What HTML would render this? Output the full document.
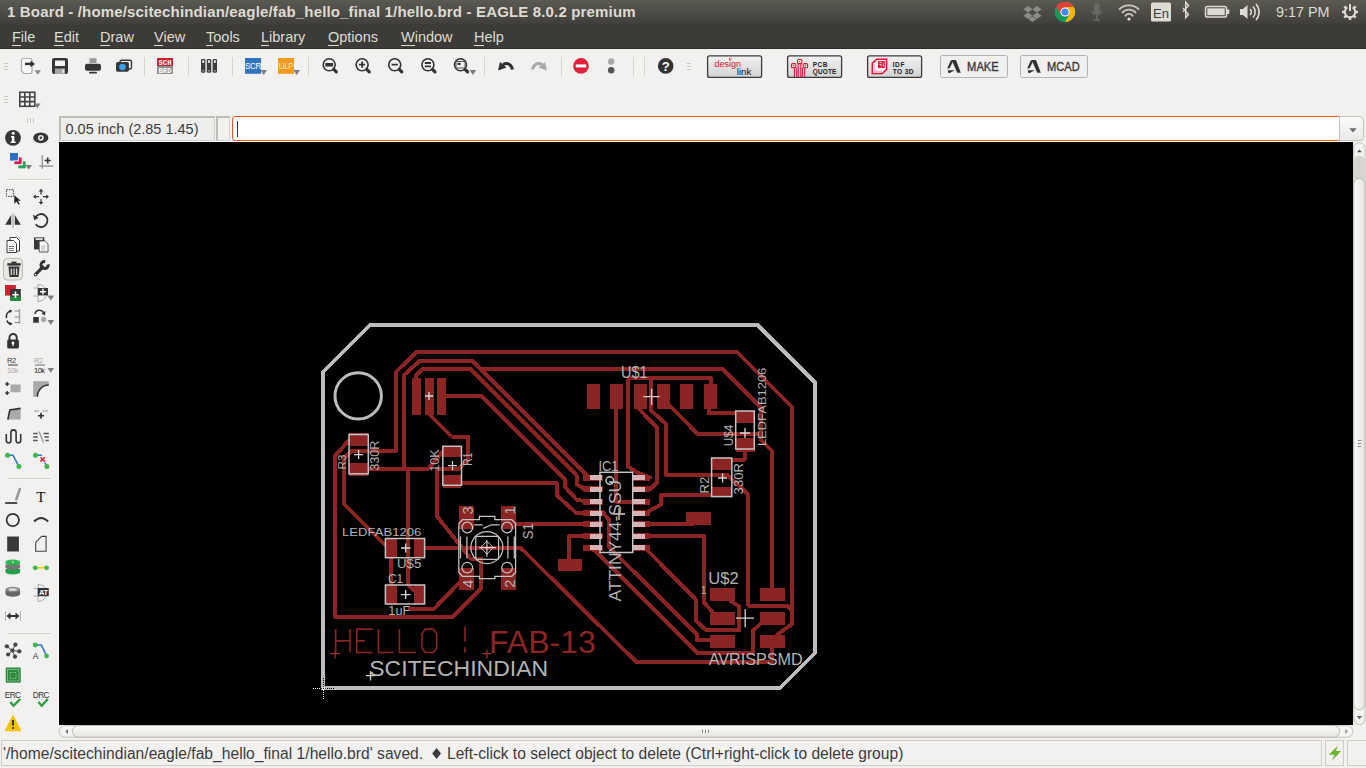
<!DOCTYPE html>
<html><head><meta charset="utf-8">
<style>
*{margin:0;padding:0;box-sizing:border-box}
html,body{width:1366px;height:768px;overflow:hidden;background:#f2f1f0;font-family:"Liberation Sans",sans-serif}
.a{position:absolute}
#title{left:0;top:0;width:1366px;height:24px;background:linear-gradient(#5a5952,#403f3b)}
#menu{left:0;top:24px;width:1366px;height:25px;background:#3c3b37;border-bottom:1px solid #2e2d2a}
.tt{color:#dfdbd2;font-weight:bold;font-size:15px;letter-spacing:0.16px;white-space:pre}
.mi{color:#dfdbd2;font-size:14.5px;white-space:pre;top:28.8px}
.mi u{text-decoration:none;border-bottom:1px solid #dfdbd2}
#canvas{left:59px;top:142px;width:1294px;height:583px;background:#000}
#coord{left:59px;top:116px;width:156px;height:25px;border:1px solid #d3d1cd;border-top:2px solid #bebcb8;border-left:2px solid #bebcb8;background:#efeeec}
#coordtxt{left:65.5px;top:121px;font-size:14.5px;color:#3c3c3c;white-space:pre}
#cbox2{left:216px;top:116px;width:14px;height:25px;border:1px solid #d3d1cd;border-top:2px solid #bebcb8;border-left:2px solid #bebcb8}
#cmd{left:232px;top:116px;width:1108px;height:25px;border:1px solid #e35d2c;border-radius:3px 0 0 3px;background:#fff}
#cmddrop{left:1339px;top:116px;width:25px;height:25px;border:1px solid #c3c1bd;border-radius:0 4px 4px 0;background:linear-gradient(#fbfbfa,#eae9e7)}
#vscroll{left:1353px;top:142px;width:13px;height:583px;background:#f2f1f0}
#hscroll{left:59px;top:725px;width:1294px;height:13px;background:#f2f1f0}
#status{left:1px;top:740px;width:1321px;height:26px;border:1px solid #cfcdca;background:#f2f1f0}
#st2{left:1325px;top:740px;width:19px;height:26px;border:1px solid #cfcdca}
#st3{left:1347px;top:740px;width:19px;height:26px;border:1px solid #cfcdca;border-right:none}
.sttxt{top:744.6px;font-size:15.6px;color:#3c3c3c;white-space:pre}
</style></head><body>
<div id="title" class="a"></div>
<div class="a tt" style="left:7px;top:3px">1 Board - /home/scitechindian/eagle/fab_hello_final 1/hello.brd - EAGLE 8.0.2 premium</div>
<div id="menu" class="a"></div>
<div class="a mi" style="left:12px"><u>F</u>ile</div>
<div class="a mi" style="left:54px"><u>E</u>dit</div>
<div class="a mi" style="left:100px"><u>D</u>raw</div>
<div class="a mi" style="left:154px"><u>V</u>iew</div>
<div class="a mi" style="left:206px"><u>T</u>ools</div>
<div class="a mi" style="left:261px"><u>L</u>ibrary</div>
<div class="a mi" style="left:328px"><u>O</u>ptions</div>
<div class="a mi" style="left:401px"><u>W</u>indow</div>
<div class="a mi" style="left:474px"><u>H</u>elp</div>
<div class="a" style="left:1276px;top:4px;font-size:14.4px;color:#dfdbd2;white-space:pre">9:17 PM</div>

<div id="coord" class="a"></div>
<div id="coordtxt" class="a">0.05 inch (2.85 1.45)</div>
<div id="cbox2" class="a"></div>
<div id="cmd" class="a"></div>
<div class="a" style="left:237px;top:121px;width:1px;height:16px;background:#333"></div>
<div id="cmddrop" class="a"></div>

<div id="canvas" class="a"></div>
<div id="vscroll" class="a"></div>
<div id="hscroll" class="a"></div>

<div id="status" class="a"></div>
<div id="st2" class="a"></div>
<div id="st3" class="a"></div>
<div class="a sttxt" style="left:3px;letter-spacing:0.025px">'/home/scitechindian/eagle/fab_hello_final 1/hello.brd' saved.</div>
<div class="a sttxt" style="left:447px">Left-click to select object to delete (Ctrl+right-click to delete group)</div>

<svg class="a" style="left:0;top:0;font-family:'Liberation Sans'" width="1366" height="768" viewBox="0 0 1366 768">
<g id="grips" stroke="#c9c7c3" stroke-width="1">
<path d="M4,63.5h4M4,66.5h4M4,69.5h4"/>
<path d="M4,96.5h4M4,99.5h4M4,102.5h4"/>
<path d="M687,63.5h4M687,66.5h4M687,69.5h4"/>
<path d="M27.5,118v5M30.5,118v5M33.5,118v5"/>
</g>
<g id="seps" stroke="#d5d3cf" stroke-width="1">
<path d="M144.5,57v19M188.5,57v19M232.5,57v19M308.5,57v19M484.5,57v19M561.5,57v19M633.5,57v19M644.5,57v19"/>
</g>
<!-- import -->
<path d="M23,58.5h7a2,2 0 0 1 2,2v11a2,2 0 0 1 -2,2h-6l-2.5,-2.5v-10.5a2,2 0 0 1 1.5,-2z" fill="#fafafa" stroke="#a9a9a9" stroke-width="1.2"/>
<path d="M25,63.9h6" stroke="#2e2e2e" stroke-width="2.4"/>
<path d="M30.5,60.5l4.5,3.4l-4.5,3.4z" fill="#2e2e2e"/>
<path d="M34.5,70.2h6.5l-3.25,4.6z" fill="#8a8a8a"/>
<!-- save -->
<rect x="52" y="58" width="16" height="16" rx="2.2" fill="#363636"/>
<rect x="55" y="60.5" width="10" height="5.5" fill="#f2f2f2"/>
<rect x="55" y="68.5" width="10" height="5.5" fill="#a6a6a6"/>
<rect x="62.3" y="69.5" width="1.6" height="3.5" fill="#f0f0f0"/>
<!-- print -->
<rect x="89.5" y="58.2" width="7" height="4.8" fill="#9a9a9a"/>
<rect x="85" y="63.8" width="16" height="7" rx="2" fill="#363636"/>
<rect x="89" y="71.8" width="8" height="1.8" rx="0.9" fill="#363636"/>
<!-- camera -->
<rect x="120" y="60.3" width="11.5" height="8.7" rx="1.8" fill="none" stroke="#363636" stroke-width="1.4"/>
<rect x="116" y="61.9" width="12.9" height="9.8" rx="1.6" fill="#363636"/>
<circle cx="122.5" cy="67" r="3.3" fill="#3ca4e4"/>
<!-- sch brd -->
<rect x="157" y="58" width="16" height="8" fill="#c9202f"/>
<rect x="157" y="66" width="16" height="8" fill="#919191"/>
<text x="165" y="64.9" font-size="7.2" font-weight="bold" fill="#fff" text-anchor="middle" font-family="Liberation Mono">SCH</text>
<text x="165" y="72.9" font-size="7.2" font-weight="bold" fill="#fff" text-anchor="middle" font-family="Liberation Mono">BRD</text>
<!-- library -->
<g fill="#3e3e3e"><rect x="201" y="59" width="4.4" height="13.8" rx="1.2"/><rect x="206.8" y="59" width="4.4" height="13.8" rx="1.2"/><rect x="212.6" y="59" width="4.4" height="13.8" rx="1.2"/></g>
<g fill="#fff"><rect x="202.3" y="60.3" width="1.8" height="2.5"/><rect x="208.1" y="60.3" width="1.8" height="2.5"/><rect x="213.9" y="60.3" width="1.8" height="2.5"/></g>
<g fill="#9a9a9a"><rect x="202.3" y="70" width="1.8" height="1.5"/><rect x="208.1" y="70" width="1.8" height="1.5"/><rect x="213.9" y="70" width="1.8" height="1.5"/></g>
<!-- SCR ULP -->
<rect x="245" y="58" width="16" height="15.8" fill="#2f74c0"/>
<text x="253" y="69.3" font-size="8.2" fill="#fff" text-anchor="middle" letter-spacing="-0.5">SCR</text>
<path d="M260.4,70h6.6l-3.3,5z" fill="#7d7d7d"/>
<rect x="278" y="58" width="16" height="15.8" fill="#f39a1f"/>
<text x="286" y="69.3" font-size="8.2" fill="#fde6c4" text-anchor="middle" letter-spacing="-0.5">ULP</text>
<path d="M293.4,70h6.6l-3.3,5z" fill="#7d7d7d"/>
<!-- zooms -->
<g stroke="#333" fill="none">
<circle cx="329.2" cy="64.7" r="6" stroke-width="1.6"/>
<circle cx="362.1" cy="64.7" r="6" stroke-width="1.6"/>
<circle cx="394.7" cy="64.7" r="6" stroke-width="1.6"/>
<circle cx="427.9" cy="64.7" r="6" stroke-width="1.6"/>
<circle cx="460.5" cy="64.7" r="6" stroke-width="1.6"/>
<path d="M333.8,69.3l2.5,2.5M366.7,69.3l2.5,2.5M399.3,69.3l2.5,2.5M432.5,69.3l2.5,2.5M465.1,69.3l2.5,2.5" stroke-width="3.2" stroke-linecap="round"/>
<path d="M359,64.7h6.2M362.1,61.6v6.2M391.6,64.7h6.2M424.8,63h6.2M424.8,66.4h6.2" stroke-width="1.8"/>
</g>
<rect x="325.3" y="63" width="7.8" height="3.5" fill="#333"/>
<rect x="456" y="61.5" width="9" height="6.5" fill="none" stroke="#555" stroke-width="1"/>
<rect x="457.5" y="62.8" width="3" height="2.2" fill="#333"/>
<path d="M469.6,70h6.6l-3.3,5z" fill="#7d7d7d"/>
<!-- undo redo -->
<path d="M512.5,69.5c-1,-5 -5,-7.5 -9.5,-5" fill="none" stroke="#2e2e2e" stroke-width="3"/>
<path d="M498,70.5l2,-8.5l6.5,5.5z" fill="#2e2e2e"/>
<path d="M532.5,69.5c1,-5 5,-7.5 9.5,-5" fill="none" stroke="#a8a8a8" stroke-width="3"/>
<path d="M547,70.5l-2,-8.5l-6.5,5.5z" fill="#a8a8a8"/>
<!-- stop, dots, help -->
<circle cx="581" cy="65.9" r="7.8" fill="#e2213b"/>
<rect x="575.8" y="64.4" width="10.4" height="3" fill="#fff"/>
<circle cx="611.2" cy="61.5" r="3.2" fill="#a9a9a9"/>
<circle cx="611.2" cy="70.3" r="3.3" fill="#555"/>
<circle cx="665.7" cy="65.9" r="7.8" fill="#333"/>
<text x="665.7" y="70.6" font-size="13" font-weight="bold" fill="#fff" text-anchor="middle">?</text>
<!-- buttons -->
<defs><linearGradient id="bg1" x1="0" y1="0" x2="0" y2="1"><stop offset="0" stop-color="#f3f3f3"/><stop offset="1" stop-color="#d2d2d2"/></linearGradient></defs>
<g stroke="#3a3a3a" stroke-width="1.3" fill="url(#bg1)">
<rect x="707.6" y="55.8" width="54" height="21.6" rx="2"/>
<rect x="787.6" y="55.8" width="54" height="21.6" rx="2"/>
<rect x="867.6" y="55.8" width="54" height="21.6" rx="2"/>
</g>
<text x="714.6" y="66.8" font-size="9.6" fill="#e0102e" textLength="26.5" lengthAdjust="spacingAndGlyphs">design</text>
<text x="736.8" y="74.8" font-size="9.6" fill="#111" textLength="14.6" lengthAdjust="spacingAndGlyphs">link</text>
<path d="M730.2,57.8l1.2,1.2l-1.2,1.2l-1.2,-1.2z" fill="none" stroke="#e0102e" stroke-width="0.7"/>
<g stroke="#e0102e" stroke-width="1.05" fill="none">
<path d="M794.4,77V67.8M796.7,77V67.8M798.2,77V63.6M800.8,77V63.6M802.4,77V67.8M804.7,77V67.8"/>
<rect x="791.5" y="63.6" width="4.3" height="4.2" rx="1"/><rect x="797.5" y="59.4" width="4.3" height="4.2" rx="1"/><rect x="803.3" y="63.6" width="4.3" height="4.2" rx="1"/>
</g>
<g fill="#e0102e"><circle cx="793.6" cy="65.7" r="0.6"/><circle cx="799.6" cy="61.5" r="0.6"/><circle cx="805.4" cy="65.7" r="0.6"/></g>
<text x="812.8" y="66.7" font-size="6.5" font-weight="bold" fill="#1e1e1e" textLength="14.6" lengthAdjust="spacing">PCB</text>
<text x="812.8" y="73.9" font-size="6.5" font-weight="bold" fill="#1e1e1e" textLength="23.5" lengthAdjust="spacing">QUOTE</text>
<path d="M872.3,63.4L876.7,59.3H886.6V69.4L882.4,73.6H872.3Z" fill="#fff" stroke="#e0102e" stroke-width="1.5"/>
<rect x="878" y="61.1" width="6.8" height="6.8" fill="#e0102e"/>
<path d="M879.3,62.6h2.4M879.3,64.6h1.8v1.8M883.3,63.3v3.2" stroke="#fff" stroke-width="0.8" fill="none"/>
<path d="M874.3,64v7.5h8M874.3,71.5l1.8,-1.8" stroke="#f0a0ab" stroke-width="0.8" fill="none"/>
<text x="892.7" y="66.8" font-size="6.6" font-weight="bold" fill="#222" letter-spacing="0.6">IDF</text>
<text x="892.7" y="74" font-size="6.6" font-weight="bold" fill="#222" letter-spacing="0.4">TO 3D</text>
<g stroke="#b3b3b3" stroke-width="1" fill="#f1f0ef">
<rect x="940.5" y="55.5" width="67" height="22" rx="2"/>
<rect x="1020.5" y="55.5" width="67" height="22" rx="2"/>
</g>
<g fill="#333" transform="translate(0,0)">
<path d="M951,60.1H956L960.8,72.8H957.2L952.6,62.2Z"/>
<path d="M951,60.1L952.6,62.2L949.4,68.6H947.2Z"/>
<path d="M947.8,70.3H954.8L949.6,72.9H948.3Z"/>
</g>
<g fill="#333" transform="translate(80,0)">
<path d="M951,60.1H956L960.8,72.8H957.2L952.6,62.2Z"/>
<path d="M951,60.1L952.6,62.2L949.4,68.6H947.2Z"/>
<path d="M947.8,70.3H954.8L949.6,72.9H948.3Z"/>
</g>
<text x="967.1" y="70.9" font-size="12.1" fill="#3a3a3a" stroke="#3a3a3a" stroke-width="0.35" textLength="31.6" lengthAdjust="spacingAndGlyphs">MAKE</text>
<text x="1047.1" y="70.9" font-size="12.1" fill="#3a3a3a" stroke="#3a3a3a" stroke-width="0.35" textLength="32.6" lengthAdjust="spacingAndGlyphs">MCAD</text>
<!-- grid icon toolbar2 -->
<g stroke="#444" stroke-width="1.6" fill="none">
<rect x="19.8" y="92.3" width="15" height="14"/>
<path d="M24.8,92.3v14M29.8,92.3v14M19.8,97h15M19.8,101.6h15"/>
</g>
<path d="M34,103.5h6.6l-3.3,4.8z" fill="#7d7d7d"/>
<!-- left panel -->
<g id="lp">
<circle cx="13" cy="137.8" r="7.9" fill="#373737"/>
<circle cx="13.2" cy="133.3" r="1.5" fill="#fff"/>
<path d="M11,136h3.3v5.6h1.3v1.5h-5v-1.5h1.3v-4.1h-0.9z" fill="#fff"/>
<ellipse cx="40.8" cy="137.8" rx="7.6" ry="5.4" fill="#373737"/>
<circle cx="40.8" cy="137.8" r="2.9" fill="#f2f1f0"/>
<circle cx="40.8" cy="137.8" r="1.3" fill="#373737"/>
<rect x="10" y="153" width="8" height="7.6" fill="#2d6fc0"/>
<path d="M18.5,157h3.5v7.6h-8v-3.6h4.5z" fill="#d81b4c" stroke="#fff" stroke-width="0.7"/>
<path d="M22.5,161h3.5v7.8h-8v-3.8h4.5z" fill="#20a455" stroke="#fff" stroke-width="0.7"/>
<path d="M25.3,165h6.7l-3.35,4.6z" fill="#7d7d7d"/>
<path d="M42.3,155.2v13.6M39.3,166h13.9" stroke="#9a9a9a" stroke-width="1.5"/>
<path d="M44.7,160.5h6M47.7,157.5v6" stroke="#333" stroke-width="1.6"/>
<path d="M8.2,179.5h42.8" stroke="#d3d1cd" stroke-width="1"/>
<path d="M8.2,180.5h42.8" stroke="#fbfbfa" stroke-width="1"/>
<!-- select / move -->
<rect x="6.4" y="189.7" width="7" height="6.7" fill="none" stroke="#333" stroke-width="1" stroke-dasharray="1.5,1"/>
<path d="M14.3,195.2v8.5l2.2,-2.2l2,3.3l1.3,-0.8l-2,-3.2h3z" fill="#222"/>
<g fill="#333"><path d="M41,188.7l-2.3,2.8h4.6z M41,204.7l-2.3,-2.8h4.6z M33,196.7l2.8,-2.3v4.6z M49,196.7l-2.8,-2.3v4.6z"/></g>
<path d="M41,191v3.5M41,199v3.5M35.5,196.7h3.5M43,196.7h3.5" stroke="#333" stroke-width="1.2"/>
<!-- mirror / rotate -->
<path d="M5.2,224.7l6,-9.7v9.7z M20.8,224.7l-6,-9.7v9.7z" fill="#333"/>
<path d="M13,213.6v14.4" stroke="#aaa" stroke-width="1.3"/>
<path d="M35.7,224.3a6.5,6.5 0 1 0 -0.6,-6.5" fill="none" stroke="#333" stroke-width="1.8"/>
<path d="M33,214.8l1.2,5.5l4.5,-2.5z" fill="#333"/>
<!-- copy / paste -->
<path d="M10,237.5h6.5l3,3v10.5h-9.5z" fill="#fff" stroke="#3a3a3a" stroke-width="1"/>
<path d="M7,240.5h6.5l3,3v9h-9.5z" fill="#fff" stroke="#3a3a3a" stroke-width="1"/>
<path d="M9,246.5h5M9,248.5h5M9,250.5h5" stroke="#666" stroke-width="0.9"/>
<rect x="34" y="237.4" width="10.3" height="12" fill="#363636"/>
<rect x="35.5" y="238.3" width="7.3" height="1.6" fill="#f2f1f0"/>
<path d="M39.2,241h6l2.8,2.8v8.2h-8.8z" fill="#fff" stroke="#555" stroke-width="1"/>
<path d="M41,246h4.5M41,248h4.5M41,250h4.5" stroke="#999" stroke-width="0.8"/>
<!-- delete selected / wrench -->
<rect x="3.5" y="258.5" width="19" height="21.5" rx="3.5" fill="#e9e7e4" stroke="#bcbab6" stroke-width="1"/>
<rect x="7.3" y="263.2" width="13.4" height="2.4" fill="#333"/>
<rect x="11.5" y="261.6" width="5" height="2" fill="#333"/>
<path d="M8.5,266.5h11l-1,10.5h-9z" fill="#333"/>
<path d="M11.3,268.5v6.5M14,268.5v6.5M16.7,268.5v6.5" stroke="#e9e7e4" stroke-width="1.2"/>
<path d="M35.3,274.7l7.5,-7.5" stroke="#333" stroke-width="3.2" stroke-linecap="round"/>
<path d="M48.15,264.37A3.6,3.6 0 1 1 45.22,261.45" fill="none" stroke="#333" stroke-width="3"/>
<circle cx="35.4" cy="274.6" r="0.8" fill="#f2f1f0"/>
<!-- add / replace -->
<rect x="5" y="285" width="10.9" height="10.6" fill="#d21f2e"/>
<rect x="10.2" y="289" width="10.6" height="11.8" fill="#373737"/>
<rect x="10.2" y="296.7" width="10.6" height="4.1" fill="#21913a"/>
<path d="M12.3,294.7h6.4M15.5,291.5v6.4" stroke="#fff" stroke-width="1.6"/>
<path d="M38,284.5c6,0 8.5,4 8.5,8.5s-2.5,8 -8.5,8.5M38,284.5v17M33.5,288h4.5M33.5,296h4.5" fill="none" stroke="#aaa" stroke-width="1"/>
<rect x="37.8" y="288" width="10.2" height="7.4" fill="#373737"/>
<path d="M40,291.7h5.8M42.9,288.8v5.8" stroke="#fff" stroke-width="1.4"/>
<path d="M47.5,295.6h6.6l-3.3,5z" fill="#7d7d7d"/>
<!-- pinswap / smash -->
<path d="M10.5,311c-3.5,1 -4.5,4.5 -4,7M7,320.5c0.5,2 2,3.5 4.5,3.5" fill="none" stroke="#333" stroke-width="1.6"/>
<path d="M9,309.5l3.5,1.3l-2.8,2.5z M9.5,325.5l3,-1.8l-3,-2z" fill="#333"/>
<path d="M19.5,309v15" stroke="#aaa" stroke-width="1.6"/>
<path d="M14.6,311h4.9M14.6,317h4.9M14.6,322.5h4.9" stroke="#888" stroke-width="1.2"/>
<rect x="33.2" y="317" width="5.6" height="5.7" fill="#333"/>
<circle cx="43.6" cy="319.5" r="2.7" fill="#a8a8a8"/>
<path d="M35,314c0.5,-4 6,-5.5 9,-1" fill="none" stroke="#333" stroke-width="1.5"/>
<path d="M45.5,311l-0.5,4.5l-3.5,-2z" fill="#333"/>
<path d="M47.5,320h6.6l-3.3,5z" fill="#7d7d7d"/>
<!-- lock -->
<path d="M9.5,340.5v-3a3.6,3.6 0 0 1 7.2,0v3" fill="none" stroke="#333" stroke-width="2"/>
<rect x="7.2" y="339.5" width="11.7" height="9" rx="1.5" fill="#333"/>
<circle cx="13" cy="343" r="1.4" fill="#fff"/>
<rect x="12.4" y="343" width="1.2" height="3" fill="#fff"/>
<!-- name/value -->
<text x="7" y="362.8" font-size="7.5" fill="#333" letter-spacing="-0.3">R2</text>
<path d="M8,365h10" stroke="#666" stroke-width="1.3"/>
<text x="7" y="373" font-size="7.5" fill="#aaa" letter-spacing="-0.3">10k</text>
<text x="34" y="362.8" font-size="7.5" fill="#aaa" letter-spacing="-0.3">R2</text>
<path d="M35,365h10" stroke="#888" stroke-width="1.3"/>
<text x="34" y="373" font-size="7.5" fill="#222" letter-spacing="-0.5">10k</text>
<path d="M47.5,368h6.6l-3.3,4.8z" fill="#7d7d7d"/>
<!-- row 389 -->
<path d="M5.2,384h4M7.2,382v4M5.2,393h4M7.2,391v4" stroke="#333" stroke-width="1.4"/>
<rect x="10.4" y="384.5" width="10.2" height="7.8" fill="#aaa"/>
<path d="M33.2,381.2h15.6v3.8a11.4,11.6 0 0 0 -11.4,11.8h-4.2z" fill="#a9a9a9"/>
<path d="M48.8,385a11.4,11.6 0 0 0 -11.4,11.8" fill="none" stroke="#333" stroke-width="1.6"/>
<!-- row 413 -->
<path d="M7.8,419.6l2,-9.6l10.8,-2v11.6z" fill="#aaa"/>
<path d="M7.8,419.6l2,-9.6l10.8,-1.6" fill="none" stroke="#333" stroke-width="1.6"/>
<path d="M34,411h5M42.3,411h5.7" stroke="#999" stroke-width="1.2"/>
<path d="M38,415.7h6M41,412.7v6" stroke="#333" stroke-width="1.6"/>
<!-- meander / split -->
<path d="M6.3,434v6.5a2.3,2.3 0 0 0 4.6,0v-8a2.6,2.6 0 0 1 5.2,0v8a2.3,2.3 0 0 0 4.6,0v-6.5" fill="none" stroke="#333" stroke-width="1.6"/>
<path d="M33.2,433.5h4.5M33.2,437h4.5M33.2,440.5h4.5M43.5,433.5h5.3M44.5,437h4.3M45.5,440.5h3.3" stroke="#555" stroke-width="1.4"/>
<path d="M39,431.5l4.5,11" stroke="#999" stroke-width="1.3"/>
<!-- route / ripup -->
<path d="M7.5,455.2h5.5l5.9,11.3" fill="none" stroke="#2b74c5" stroke-width="1.6"/>
<circle cx="7.5" cy="455.2" r="2.5" fill="#3db94a"/><circle cx="18.9" cy="466.5" r="2.5" fill="#3db94a"/>
<path d="M35.5,455.2h5.5l5.9,11.3" fill="none" stroke="#2b74c5" stroke-width="1.6"/>
<rect x="39.5" y="456" width="6.5" height="6.5" fill="#f2f1f0"/>
<path d="M40.5,457.3l4.3,4.3M44.8,457.3l-4.3,4.3" stroke="#e0203a" stroke-width="1.5"/>
<circle cx="35.5" cy="455.2" r="2.5" fill="#3db94a"/><circle cx="46.9" cy="466.5" r="2.5" fill="#3db94a"/>
<path d="M8,478.5h42.8" stroke="#d3d1cd" stroke-width="1"/>
<!-- wire / text -->
<path d="M5.2,503h12" stroke="#222" stroke-width="1.6"/>
<path d="M16.3,499.4l3.5,-10.4" stroke="#999" stroke-width="2.6" stroke-linecap="round"/>
<text x="40.8" y="502" font-size="15" fill="#111" text-anchor="middle" font-family="Liberation Serif">T</text>
<!-- circle / arc -->
<circle cx="12.8" cy="520" r="6.2" fill="none" stroke="#333" stroke-width="1.7"/>
<path d="M34.1,521.5q6.9,-7 14.1,0" fill="none" stroke="#333" stroke-width="1.9"/>
<!-- rect / polygon -->
<rect x="7.2" y="536.5" width="11.7" height="15" fill="#393939"/>
<path d="M35.7,542.4l6,-6h4.4v14.8h-10.4z" fill="none" stroke="#444" stroke-width="1.1"/>
<!-- via / signal -->
<ellipse cx="12.8" cy="572" rx="7.3" ry="2.4" fill="#21a048"/>
<rect x="5.5" y="569" width="14.6" height="3" fill="#21a048"/>
<ellipse cx="12.8" cy="567.3" rx="7.3" ry="2.4" fill="#777"/>
<rect x="5.5" y="564.5" width="14.6" height="3" fill="#777"/>
<ellipse cx="12.8" cy="563" rx="7.3" ry="2.4" fill="#2aa84d"/>
<rect x="5.5" y="562" width="14.6" height="1" fill="#2aa84d"/>
<ellipse cx="12.8" cy="562" rx="7.3" ry="2.4" fill="#32b653"/>
<circle cx="12.8" cy="562" r="0.8" fill="#fff"/>
<path d="M35.2,567.8h11.4" stroke="#f2c700" stroke-width="1.6"/>
<circle cx="35.2" cy="567.8" r="2.4" fill="#3db94a"/><circle cx="46.6" cy="567.8" r="2.4" fill="#3db94a"/>
<!-- hole / attribute -->
<ellipse cx="12.8" cy="594" rx="7.3" ry="2.8" fill="#666"/>
<rect x="5.5" y="590" width="14.6" height="4" fill="#666"/>
<ellipse cx="12.8" cy="589.5" rx="7.3" ry="2.8" fill="#8a8a8a"/>
<ellipse cx="12.8" cy="589.5" rx="4.2" ry="1.3" fill="#ddd"/>
<path d="M38,584.5c6,0 8.5,4 8.5,8.5s-2.5,8 -8.5,8.5M38,584.5v17M33.5,588.5h4.5M33.5,596h4.5" fill="none" stroke="#aaa" stroke-width="1"/>
<rect x="37.8" y="588" width="11" height="8.2" fill="#333"/>
<text x="43.3" y="595.3" font-size="7.5" font-weight="bold" fill="#fff" text-anchor="middle" letter-spacing="-0.4">AT</text>
<!-- dimension -->
<path d="M5.5,611v10M20.5,611v10" stroke="#bbb" stroke-width="1"/>
<path d="M9,616h8" stroke="#333" stroke-width="2"/>
<path d="M6.5,616l4,-3.5v7z M19.5,616l-4,-3.5v7z" fill="#333"/>
<path d="M8,633.5h42.8" stroke="#d3d1cd" stroke-width="1"/>
<!-- ratsnest / autorouter -->
<path d="M12.4,650.5L6.8,646.3M12.4,650.5L15.4,644.7M12.4,650.5L19.3,651.3M12.4,650.5L15,656.7M12.4,650.5L8.1,654.5" stroke="#444" stroke-width="1"/>
<g fill="#444"><circle cx="12.4" cy="650.5" r="2"/><circle cx="6.8" cy="646.3" r="2.1"/><circle cx="15.4" cy="644.7" r="2.1"/><circle cx="19.3" cy="651.3" r="2.1"/><circle cx="15" cy="656.7" r="2.1"/><circle cx="8.1" cy="654.5" r="2.1"/></g>
<path d="M35.2,645h6.2l5.2,11" fill="none" stroke="#2b74c5" stroke-width="1.6"/>
<circle cx="35.2" cy="645" r="2.4" fill="#3db94a"/><circle cx="46.6" cy="656" r="2.4" fill="#3db94a"/>
<text x="32.8" y="658.8" font-size="8.5" fill="#333">A</text>
<!-- board -->
<rect x="5.7" y="667.5" width="15.1" height="15.2" rx="1" fill="#2b8a3e"/>
<path d="M7.5,669.5h11.5M7.5,669.5v11.5M7.5,681h11.5M19,669.5v11.5" stroke="#e8f3ea" stroke-width="0.9" stroke-dasharray="0.9,1.1"/>
<rect x="10" y="672.5" width="6" height="6" fill="none" stroke="#bfe0c5" stroke-width="0.8" stroke-dasharray="0.8,0.9"/>
<!-- ERC DRC -->
<text x="4.8" y="697.8" font-size="8.3" fill="#333" letter-spacing="-0.6">ERC</text>
<path d="M10.4,702l3.1,3.8l6.8,-6.8" fill="none" stroke="#2e9b3c" stroke-width="2.4"/>
<text x="32.8" y="697.8" font-size="8.3" fill="#333" letter-spacing="-0.6">DRC</text>
<path d="M38.5,702l3.2,3.8l6.2,-6.8" fill="none" stroke="#2e9b3c" stroke-width="2.4"/>
<!-- warning -->
<path d="M13,715.5l7.9,15.3h-15.8z" fill="#f4c300" stroke="#f4c300" stroke-width="1" stroke-linejoin="round"/>
<path d="M13,720v5.5" stroke="#222" stroke-width="1.8"/>
<circle cx="13" cy="728" r="1" fill="#222"/>
</g>
<path d="M58.5,141v584M58,141.5h1295" stroke="#ffffff" stroke-width="1"/>
<!-- tray -->
<g fill="#8e8c87">
<path d="M1028,6l4.6,3.2l-4.6,3.2l-4.6,-3.2z M1037,6l4.6,3.2l-4.6,3.2l-4.6,-3.2z M1028,12.6l4.6,3.2l-4.6,3.2l-4.6,-3.2z M1037,12.6l4.6,3.2l-4.6,3.2l-4.6,-3.2z M1032.5,16.5l4.2,2.8l-4.2,2.8l-4.2,-2.8z"/>
</g>
<circle cx="1065" cy="12" r="10" fill="#db4437"/>
<path d="M1065,12 L1073.66,17 A10,10 0 0 1 1056.34,17 z" fill="#0f9d58"/>
<path d="M1065,12 L1056.34,17 A10,10 0 0 1 1065,2 z" fill="#db4437"/>
<path d="M1065,12 L1065,2 A10,10 0 0 1 1073.66,17 z" fill="#f4b400"/>
<path d="M1065,2 A10,10 0 0 0 1056.34,7 L1060.67,14.5 A5,5 0 0 1 1065,7 H1073.66 A10,10 0 0 0 1065,2z" fill="#db4437"/>
<path d="M1056.34,7 A10,10 0 0 0 1065,22 L1069.33,14.5 A5,5 0 0 1 1060.67,14.5z" fill="#0f9d58"/>
<path d="M1073.66,7 A10,10 0 0 1 1065,22 L1069.33,14.5 A5,5 0 0 0 1065,7z" fill="#f4b400"/>
<circle cx="1065" cy="12" r="4.6" fill="#fff"/>
<circle cx="1065" cy="12" r="3.6" fill="#4285f4"/>
<rect x="1094" y="3" width="5.5" height="11" rx="2.75" fill="#6b6963"/>
<path d="M1092,10.5a4.8,4.8 0 0 0 9.5,0M1096.75,15.5v4.5M1093.5,20h6.5" fill="none" stroke="#6b6963" stroke-width="1.5"/>
<g fill="none" stroke="#c9c6be" stroke-width="1.8">
<path d="M1119,9.5a14,14 0 0 1 20,0"/>
<path d="M1122,13a9,9 0 0 1 14,0"/>
<path d="M1125,16.3a4.5,4.5 0 0 1 8,0"/>
</g>
<circle cx="1129" cy="19" r="1.6" fill="#dfdbd2"/>
<rect x="1151" y="2.5" width="20" height="19" rx="1.5" fill="#dfdbd2"/>
<text x="1161" y="17.5" font-size="13" fill="#3c3b37" text-anchor="middle" font-weight="normal">En</text>
<path d="M1183,8l5.5,6.5l-2.8,3.2v-15.5l2.8,3.2l-5.5,6.5" fill="none" stroke="#dfdbd2" stroke-width="1.4"/>
<rect x="1205.5" y="6.5" width="21" height="10.5" rx="1.8" fill="none" stroke="#dfdbd2" stroke-width="1.5"/>
<rect x="1207.3" y="8.3" width="17.4" height="6.9" fill="#dfdbd2"/>
<rect x="1227" y="9.5" width="2.3" height="4.5" fill="#dfdbd2"/>
<path d="M1240,9h3l4.5,-4v14l-4.5,-4h-3z" fill="#dfdbd2"/>
<g fill="none" stroke="#dfdbd2" stroke-width="1.6">
<path d="M1250,9a4,4 0 0 1 0,6"/>
<path d="M1253,6.5a8,8 0 0 1 0,11"/>
<path d="M1256,4a12,12 0 0 1 0,16"/>
</g>
<g transform="translate(1350,12)" fill="#dfdbd2">
<path d="M2.6,-4.5A5.2,5.2 0 1 1 -2.6,-4.5" fill="none" stroke="#dfdbd2" stroke-width="2"/>
<rect x="-1.25" y="-8" width="2.5" height="3.2" transform="rotate(45)"/><rect x="-1.25" y="-8" width="2.5" height="3.2" transform="rotate(90)"/><rect x="-1.25" y="-8" width="2.5" height="3.2" transform="rotate(135)"/><rect x="-1.25" y="-8" width="2.5" height="3.2" transform="rotate(180)"/><rect x="-1.25" y="-8" width="2.5" height="3.2" transform="rotate(225)"/><rect x="-1.25" y="-8" width="2.5" height="3.2" transform="rotate(270)"/><rect x="-1.25" y="-8" width="2.5" height="3.2" transform="rotate(315)"/>
<rect x="-1" y="-8" width="2" height="7"/>
</g>
<defs>
<linearGradient id="vth" x1="0" y1="0" x2="1" y2="0"><stop offset="0" stop-color="#fbfbfa"/><stop offset="1" stop-color="#e6e4e1"/></linearGradient>
<linearGradient id="hth" x1="0" y1="0" x2="0" y2="1"><stop offset="0" stop-color="#fbfbfa"/><stop offset="1" stop-color="#e4e2df"/></linearGradient>
<linearGradient id="ddg" x1="0" y1="0" x2="0" y2="1"><stop offset="0" stop-color="#fbfbfa"/><stop offset="1" stop-color="#e9e8e6"/></linearGradient>
</defs>
<!-- vertical scrollbar -->
<rect x="1353.8" y="142.6" width="11.2" height="581.8" rx="5.6" fill="#f5f4f2" stroke="#bdbbb7" stroke-width="0.9"/>
<rect x="1354.2" y="155.6" width="10.4" height="26" rx="5.2" fill="#d8d6d2"/>
<rect x="1353.8" y="178.4" width="11.2" height="531.3" rx="5.6" fill="url(#vth)" stroke="#b7b4b0" stroke-width="0.9"/>
<path d="M1356.9,152.2l2.5,-2.6l2.5,2.6z" fill="#555"/>
<path d="M1356.6,716l2.8,3.2l2.8,-3.2z" fill="#666"/>
<!-- horizontal scrollbar -->
<rect x="59.2" y="725.6" width="1293.6" height="11.6" rx="5.8" fill="#f5f4f2" stroke="#bdbbb7" stroke-width="0.9"/>
<rect x="72.3" y="725.6" width="1267.4" height="11.6" rx="5.8" fill="url(#hth)" stroke="#b7b4b0" stroke-width="0.9"/>
<path d="M68,729l-2.8,2.5l2.8,2.5z" fill="#777"/>
<path d="M1345.2,729l2.8,2.5l-2.8,2.5z" fill="#999"/>
<path d="M702.5,729.5v3.5M705.5,729.5v3.5M708.5,729.5v3.5" stroke="#8a8a8a" stroke-width="1"/>
<path d="M1357.8,440.5h3.5M1357.8,443.5h3.5M1357.8,446.5h3.5" stroke="#8e8e8e" stroke-width="1"/>
<!-- combo drop arrow -->
<path d="M1349.3,128.3h7.4l-3.7,4.2z" fill="#6d6d6d"/>
<path d="M436.6,748.1L441,753.5L436.6,758.9L432.2,753.5Z" fill="#3c3c3c"/>
<!-- status lightning -->
<path d="M1338,745.6L1328.8,754.8H1334.3L1332,760.8L1341,751H1335.8Z" fill="#6cb52d"/>

<g id="board">
<!-- board outline -->
<path d="M370,325H757.5L815,382.5V653L780,688H323V372Z" fill="none" stroke="#bcbcbc" stroke-width="4" shape-rendering="crispEdges"/>
<circle cx="358.2" cy="395.9" r="23.2" fill="none" stroke="#bdbdbd" stroke-width="3"/>
<!-- origin marker -->

<g fill="none" stroke="#8d2424" stroke-width="4" stroke-linejoin="round" stroke-linecap="round" shape-rendering="crispEdges">
<path d="M777,635L792,624V407L737,352H416.6L396,372V450.8H351.6L343.75,458.6V503.8L386,546"/>
<path d="M404,468.75V375L419.6,361H472.4L589,477.5"/>
<path d="M442.4,452L428.3,468.75H368"/>
<path d="M407.8,468.75V583.8L413,590M390.5,552V590"/>
<path d="M481,369H722.3L761,407.7V440L772.3,451.3V594"/>
<path d="M416.2,380V375L422.6,369H470.4L577,475.8V484.4L585,489.4"/>
<path d="M446,395.9H481.5L565.3,479.7V487.3L577,500L588,501.5"/>
<path d="M429,414L451.5,436.5H467.9V460L458.3,469.2H436.5"/>
<path d="M437,469.2V516.3L470.6,558.6H481V588.6L452.2,617.4H335.4V455.5L348.4,441"/>
<path d="M461.4,483H556.7V495.2L576,512.8L588,513.3"/>
<path d="M516,523.8H588"/>
<path d="M588,536.25H568.75V562"/>
<path d="M424,548.2H521L636,661.7H772.3V645"/>
<path d="M410,608.5H434.5L458.9,583"/>
<path d="M650,477.5L637.2,472.5L627.5,466.25V381L630.2,377.7H710.6V390"/>
<path d="M650.5,377.7V410L666.1,424V474.8H727L748.4,494.7V605.5H787.5L792,610.6"/>
<path d="M616.1,408V501.5H645"/>
<path d="M638.75,408.75L656.7,427.2V482.7L650,489.4"/>
<path d="M666,402L697.5,433.7H761"/>
<path d="M709,405V413H740"/>
<path d="M645,513.3L660.8,504.6V495.2H720"/>
<path d="M744.5,449V459.5H725"/>
<path d="M645,524.4H692"/>
<path d="M645,536.25H704.4V603L712.2,611.5"/>
<path d="M645,548L695.5,599V620.5L706,630H739.25V606.4L730.8,601L725,595"/>
<path d="M602.5,512L608.75,519.2V546.7L697,634.5V640H712"/>
<path d="M588,547.9L595.4,550.8L697.6,653H752.8V631L763,621"/>
</g>
<g fill="#8d2424" shape-rendering="crispEdges">
<!-- 3-pad top left -->
<rect x="412.3" y="378" width="8.6" height="37"/>
<rect x="425" y="378" width="8.6" height="37"/>
<rect x="437.2" y="378" width="8.6" height="37"/>
<!-- R3 -->
<rect x="349" y="432.8" width="19" height="13.2"/>
<rect x="349" y="462.9" width="19" height="12.9"/>
<!-- R1 -->
<rect x="443" y="445.5" width="18" height="11.8"/>
<rect x="443" y="475" width="18" height="12.5"/>
<!-- U$5 -->
<rect x="386" y="538.5" width="11" height="19"/>
<rect x="413.5" y="538.5" width="11" height="19"/>
<!-- C1 -->
<rect x="386" y="585" width="11" height="19"/>
<rect x="413.5" y="585" width="11" height="19"/>
<!-- S1 -->
<rect x="459" y="506" width="14.8" height="23"/>
<rect x="501" y="506" width="15" height="23"/>
<rect x="459" y="567.8" width="14.8" height="22"/>
<rect x="501" y="567.8" width="15" height="22"/>
<!-- jumper pads -->
<rect x="557.7" y="559.2" width="24" height="12.2"/>
<rect x="686" y="512" width="25" height="13"/>
<!-- U$1 -->
<rect x="587.2" y="384.2" width="12.8" height="24.5"/>
<rect x="610.2" y="384.2" width="12.6" height="24.5"/>
<rect x="634" y="384.2" width="12.9" height="24.5"/>
<rect x="657" y="384.2" width="13" height="24.5"/>
<rect x="680" y="384.2" width="13" height="24.5"/>
<rect x="704" y="384.2" width="12.9" height="24.5"/>
<!-- U$4 -->
<rect x="736" y="411" width="18.5" height="12"/>
<rect x="736" y="438" width="18.5" height="13.5"/>
<!-- R2 -->
<rect x="712" y="457.5" width="19.8" height="12.5"/>
<rect x="712" y="486.9" width="19.8" height="10.5"/>
<!-- U$2 -->
<rect x="710.1" y="588.3" width="24.9" height="12.7"/>
<rect x="759.9" y="588.3" width="25.1" height="12.7"/>
<rect x="710.1" y="612" width="24.9" height="13"/>
<rect x="759.9" y="612" width="25.1" height="13"/>
<rect x="710.1" y="635.2" width="24.9" height="12.7"/>
<rect x="759.9" y="635.2" width="25.1" height="12.7"/>
<!-- IC1 pads -->
<rect x="583" y="474.5" width="19.5" height="6"/><rect x="583" y="486.4" width="19.5" height="6"/><rect x="583" y="498.5" width="19.5" height="6"/><rect x="583" y="510.3" width="19.5" height="6"/><rect x="583" y="521.4" width="19.5" height="6"/><rect x="583" y="533.25" width="19.5" height="6"/><rect x="583" y="544.9" width="19.5" height="6"/>
<rect x="631.7" y="474.5" width="18.7" height="6"/><rect x="631.7" y="486.4" width="18.7" height="6"/><rect x="631.7" y="498.5" width="18.7" height="6"/><rect x="631.7" y="510.3" width="18.7" height="6"/><rect x="631.7" y="521.4" width="18.7" height="6"/><rect x="631.7" y="533.25" width="18.7" height="6"/><rect x="631.7" y="544.9" width="18.7" height="6"/>
</g>
<g fill="#d9b3b3" shape-rendering="crispEdges">
<rect x="590" y="475" width="12" height="5"/><rect x="590" y="486.9" width="12" height="5"/><rect x="590" y="499" width="12" height="5"/><rect x="590" y="510.8" width="12" height="5"/><rect x="590" y="521.9" width="12" height="5"/><rect x="590" y="533.75" width="12" height="5"/><rect x="590" y="545.4" width="12" height="5"/>
<rect x="632.5" y="475" width="12.5" height="5"/><rect x="632.5" y="486.9" width="12.5" height="5"/><rect x="632.5" y="499" width="12.5" height="5"/><rect x="632.5" y="510.8" width="12.5" height="5"/><rect x="632.5" y="521.9" width="12.5" height="5"/><rect x="632.5" y="533.75" width="12.5" height="5"/><rect x="632.5" y="545.4" width="12.5" height="5"/>
</g>
<!-- silk outlines -->
<g fill="none" stroke="#c4c4c4" stroke-width="1.5">
<rect x="349" y="434.5" width="19.3" height="39.3"/>
<rect x="442.8" y="446.3" width="18.7" height="39"/>
<rect x="385.4" y="538.5" width="39.2" height="19.2"/>
<rect x="385.4" y="585" width="39.2" height="19"/>
<rect x="735.7" y="411" width="18.6" height="38"/>
<rect x="711.6" y="458" width="20.2" height="38.6"/>
<rect x="600" y="472.3" width="32.7" height="80.2"/>
<circle cx="609.8" cy="480.6" r="3.8"/>
</g>
<!-- S1 silk -->
<g fill="none" stroke="#c2c2c2" stroke-width="1.25">
<path d="M462.5,519.7H479.4V516.4H494.9V519.7H511.8L515.6,523.5V572.5L511.8,576.3H494.9V578.5H479.4V576.3H462.5L458.8,572.5V523.5Z"/>
<circle cx="467.3" cy="527.5" r="5.3"/><circle cx="507.1" cy="527.5" r="5.3"/><circle cx="467.3" cy="567.6" r="5.3"/><circle cx="507.1" cy="567.6" r="5.3"/>
<circle cx="486.9" cy="547.6" r="16"/>
<rect x="475.8" y="536.4" width="22.8" height="23" rx="1.5"/>
<path d="M486.9,541.2L493.3,547.6L486.9,554L480.5,547.6Z" stroke-width="1"/>
<path d="M460.5,536.6V558.5M466.9,536.6V558.5M507.9,536.6V558.5M514.3,536.6V558.5"/>
<path d="M474.1,524.8H482.8M483.3,528.4L491.5,524.8H499.7"/>
</g>
<path d="M479.2,547.6H496M486.9,540.3V556.7" stroke="#e0e0e0" stroke-width="1.1"/>
<!-- crosses -->
<g stroke="#d8d8d8" stroke-width="1.3" fill="none">
<path d="M425,396H433M429,392V400"/>
<path d="M354,454.6H363M358.6,450V459"/>
<path d="M448,465.7H457M452.5,461V470"/>
<path d="M401,548H410.5M405.7,543.5V552.5"/>
<path d="M401,594.6H410.5M405.7,590V599"/>
<path d="M643.5,396.7H659.5M651.6,388.7V404.7"/>
<path d="M740,433H750M745,428V438"/>
<path d="M718,478H727M722.6,473.5V482.5"/>
<path d="M736,618.2H754M745.2,609.2V627.2"/>
<path d="M613,514H625M619,508V520"/>
<path d="M366,675.7H375M370.5,671V680.4"/>
</g>
<!-- labels -->
<g fill="#b4b4b4" font-family="Liberation Sans" font-size="13">
<text x="621.0" y="378.0" font-size="16.76" textLength="26.5" lengthAdjust="spacingAndGlyphs">U$1</text>
<text x="598.5" y="470.5" font-size="14.94" textLength="19.9" lengthAdjust="spacingAndGlyphs">IC1</text>
<text x="708.3" y="583.5" font-size="16.34" textLength="30.4" lengthAdjust="spacingAndGlyphs">U$2</text>
<text x="342.1" y="535.9" font-size="11.59" textLength="79.1" lengthAdjust="spacingAndGlyphs">LEDFAB1206</text>
<text x="397.1" y="567.5" font-size="11.87" textLength="24.2" lengthAdjust="spacingAndGlyphs">U$5</text>
<text x="387.9" y="583.2" font-size="11.87" textLength="15.2" lengthAdjust="spacingAndGlyphs">C1</text>
<text x="388.3" y="614.8" font-size="12.29" textLength="22.0" lengthAdjust="spacingAndGlyphs">1uF</text>
<text x="708.7" y="664.5" font-size="15.64" textLength="94.0" lengthAdjust="spacingAndGlyphs">AVRISPSMD</text>
<text x="369.2" y="675.7" font-size="21.93" textLength="178.9" lengthAdjust="spacingAndGlyphs">SCITECHINDIAN</text>
<g transform="rotate(-90)">
<text x="-469.4" y="345.7" font-size="11.45" textLength="14.8" lengthAdjust="spacingAndGlyphs">R3</text>
<text x="-470.7" y="378.9" font-size="12.01" textLength="30.1" lengthAdjust="spacingAndGlyphs">330R</text>
<text x="-471.7" y="438.7" font-size="12.15" textLength="22.5" lengthAdjust="spacingAndGlyphs">10K</text>
<text x="-465.7" y="472.0" font-size="12.15" textLength="13.3" lengthAdjust="spacingAndGlyphs">R1</text>
<text x="-493.4" y="709.3" font-size="12.29" textLength="16.8" lengthAdjust="spacingAndGlyphs">R2</text>
<text x="-494.4" y="742.5" font-size="12.29" textLength="31.4" lengthAdjust="spacingAndGlyphs">330R</text>
<text x="-446.3" y="732.9" font-size="12.01" textLength="21.7" lengthAdjust="spacingAndGlyphs">U$4</text>
<text x="-446.1" y="765.7" font-size="11.17" textLength="78.4" lengthAdjust="spacingAndGlyphs">LEDFAB1206</text>
<text x="-601.5" y="621.2" font-size="16.41" textLength="121.6" lengthAdjust="spacingAndGlyphs">ATTINY44-SSU</text>
<text x="-539.3" y="533.0" font-size="15.36" textLength="16.2" lengthAdjust="spacingAndGlyphs">S1</text>
<text x="-514.4" y="473.0" font-size="14.66">3</text>
<text x="-514.4" y="514.5" font-size="14.66">1</text>
<text x="-587.7" y="473.2" font-size="14.53">4</text>
<text x="-587.7" y="514.5" font-size="14.66">2</text>
</g>
<text x="701" y="593.7" font-size="10">1</text>

</g>
<!-- origin -->
<g shape-rendering="crispEdges"><rect x="313" y="688" width="1" height="1" fill="#fff"/><rect x="323" y="678" width="1" height="1" fill="#000"/><rect x="315" y="688" width="1" height="1" fill="#fff"/><rect x="323" y="680" width="1" height="1" fill="#000"/><rect x="317" y="688" width="1" height="1" fill="#fff"/><rect x="323" y="682" width="1" height="1" fill="#000"/><rect x="319" y="688" width="1" height="1" fill="#fff"/><rect x="323" y="684" width="1" height="1" fill="#000"/><rect x="321" y="688" width="1" height="1" fill="#000"/><rect x="323" y="686" width="1" height="1" fill="#000"/><rect x="323" y="688" width="1" height="1" fill="#000"/><rect x="325" y="688" width="1" height="1" fill="#000"/><rect x="323" y="690" width="1" height="1" fill="#fff"/><rect x="327" y="688" width="1" height="1" fill="#000"/><rect x="323" y="692" width="1" height="1" fill="#fff"/><rect x="329" y="688" width="1" height="1" fill="#000"/><rect x="323" y="694" width="1" height="1" fill="#fff"/><rect x="331" y="688" width="1" height="1" fill="#000"/><rect x="323" y="696" width="1" height="1" fill="#fff"/><rect x="333" y="688" width="1" height="1" fill="#000"/><rect x="323" y="698" width="1" height="1" fill="#fff"/></g>
<circle cx="323.5" cy="688.5" r="1.3" fill="none" stroke="#fff" stroke-width="0.9"/>
<!-- HELLO ! FAB-13 -->
<path d="M330.2,653.6H339.9M335.1,649.5V658.8M482.5,653.6H491.5M487,649.5V658.8" stroke="#a03030" stroke-width="1.2"/>
<g fill="none" stroke="#8d2424" stroke-width="1.6">
<path d="M335.7,629.1V652.5M350,629.1V652.5M335.7,640.9H350"/>
<path d="M372.8,629.1H356.8V652.5H372.8M356.8,640.9H364.8"/>
<path d="M378.5,629.1V652.5H393.9"/>
<path d="M399.4,629.1V652.5H415.8"/>
<path d="M425.2,629.1H433.4L436.7,634V647.8L433.4,652.5H425.2L421.9,647.8V634Z"/>
<path d="M465,626.4V641.8M465,647.3V652.5"/>
</g>
<text x="489" y="652.8" font-size="32" fill="#8d2424" font-family="Liberation Sans">FAB-13</text>
</g>

</svg>
</body></html>
